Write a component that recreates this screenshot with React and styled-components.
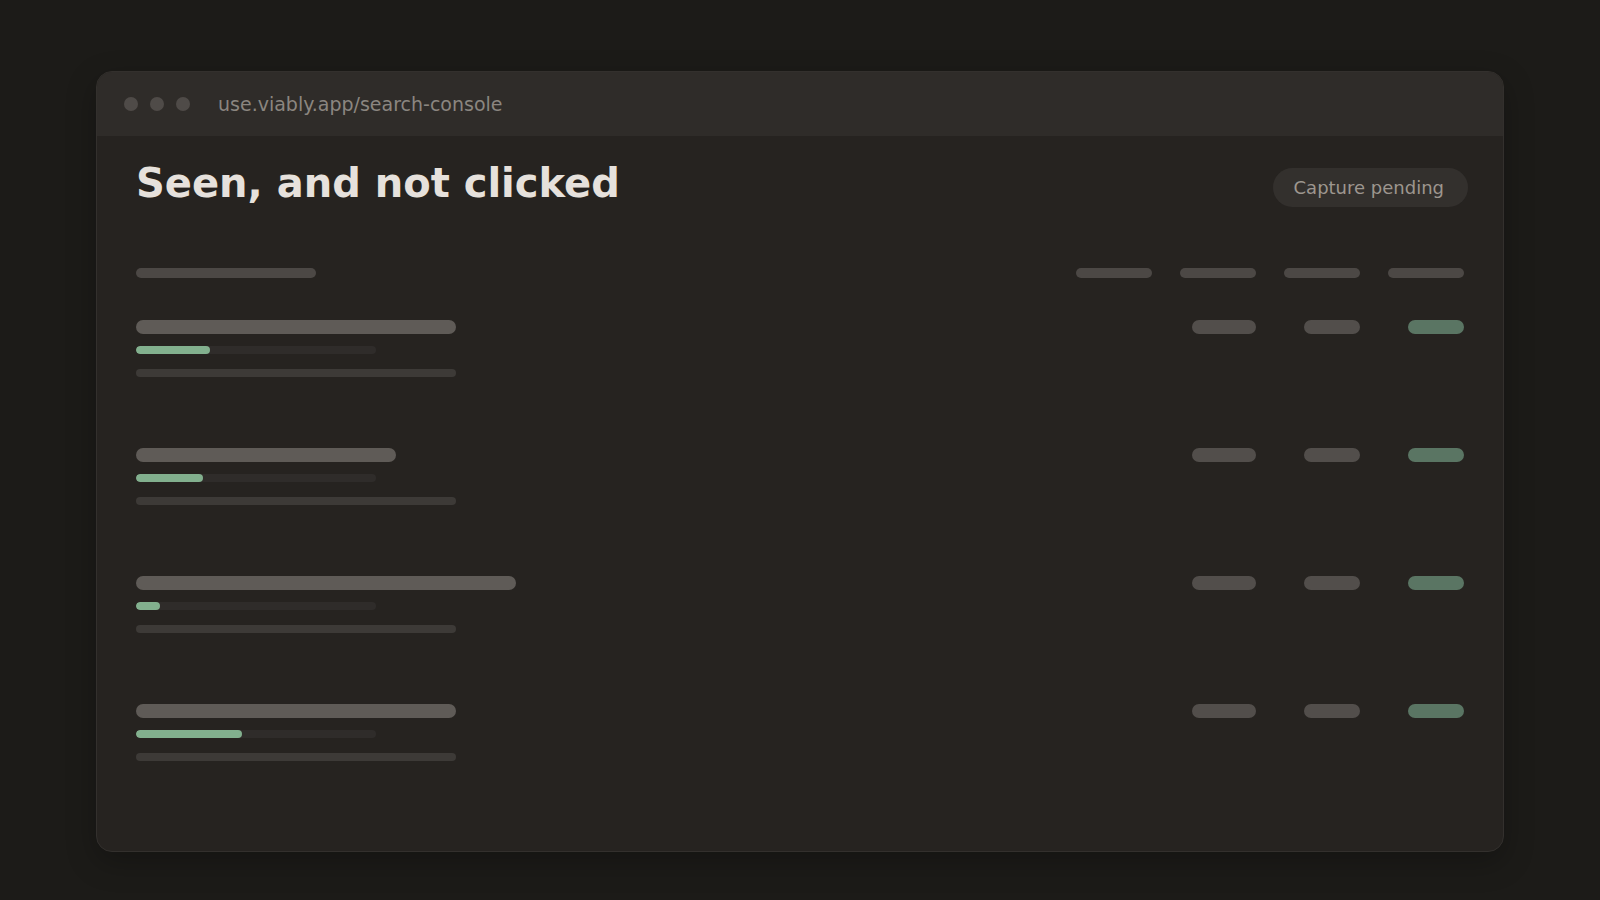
import React from 'react';
import styled, { createGlobalStyle } from 'styled-components';

const Global = createGlobalStyle`
  html, body {
    margin: 0;
    padding: 0;
    background: #1c1b18;
    font-family: "DejaVu Sans", "Liberation Sans", sans-serif;
  }
`;

const Page = styled.div`
  width: 1600px;
  height: 900px;
  box-sizing: border-box;
  padding: 71px 96px 0;
`;

const Window = styled.div`
  height: 781px;
  box-sizing: border-box;
  background: #262320;
  border: 1px solid #33302d;
  border-radius: 16px;
  overflow: hidden;
  box-shadow: 0 10px 30px rgba(0, 0, 0, 0.25);
`;

const TitleBar = styled.div`
  height: 64px;
  display: flex;
  align-items: center;
  padding-left: 27px;
  background: #2f2c29;
`;

const Dots = styled.div`
  display: flex;
  gap: 12px;
  margin-right: 28px;
`;

const Dot = styled.span`
  width: 14px;
  height: 14px;
  border-radius: 50%;
  background: #4f4b48;
`;

const Url = styled.span`
  font-size: 19px;
  color: #8b8680;
`;

const Content = styled.div`
  padding: 24px 39px 0 39px;
`;

const Header = styled.div`
  display: flex;
  justify-content: space-between;
  align-items: flex-start;
`;

const Title = styled.h1`
  margin: 0;
  font-size: 40px;
  line-height: 46px;
  font-weight: bold;
  color: #e6e1dc;
`;

const Badge = styled.div`
  margin-top: 8px;
  margin-right: -4px;
  height: 39px;
  padding: 0 24px 0 21px;
  display: flex;
  align-items: center;
  border-radius: 20px;
  background: #33302d;
  color: #9d968f;
  font-size: 18px;
`;

const Table = styled.div`
  margin-top: 61px;
  display: flex;
  flex-direction: column;
`;

const Row = styled.div`
  display: grid;
  grid-template-columns: 1fr repeat(4, 76px);
  column-gap: 28px;
  align-items: start;
  margin-bottom: ${p => p.$gap}px;
`;

const Bar = styled.div`
  width: ${p => p.$w}px;
  height: ${p => p.$h}px;
  border-radius: ${p => p.$h / 2}px;
  background: ${p => p.$c};
  justify-self: end;
`;

const Lines = styled.div`
  display: flex;
  flex-direction: column;
`;

const RowTitle = styled.div`
  width: ${p => p.$w}px;
  height: 14px;
  border-radius: 7px;
  background: #5f5b57;
`;

const Track = styled.div`
  width: 240px;
  height: 8px;
  margin-top: 12px;
  border-radius: 4px;
  background: #2f2c2a;
  overflow: hidden;
`;

const Fill = styled.div`
  width: ${p => p.$pct}%;
  height: 100%;
  border-radius: 4px;
  background: #82b08e;
`;

const SubLine = styled.div`
  width: 320px;
  height: 8px;
  margin-top: 15px;
  border-radius: 4px;
  background: #3d3a37;
`;

const HeadLabel = styled.div`
  width: 180px;
  height: 10px;
  border-radius: 5px;
  background: #4c4845;
`;

const rows = [
  { title: 320, pct: 31 },
  { title: 260, pct: 28 },
  { title: 380, pct: 10 },
  { title: 320, pct: 44 },
];

export default function App() {
  return (
    <>
      <Global />
      <Page>
        <Window>
          <TitleBar>
            <Dots>
              <Dot />
              <Dot />
              <Dot />
            </Dots>
            <Url>use.viably.app/search-console</Url>
          </TitleBar>
          <Content>
            <Header>
              <Title>Seen, and not clicked</Title>
              <Badge>Capture pending</Badge>
            </Header>
            <Table>
              <Row $gap={42}>
                <HeadLabel />
                <Bar $w={76} $h={10} $c="#4c4845" />
                <Bar $w={76} $h={10} $c="#4c4845" />
                <Bar $w={76} $h={10} $c="#4c4845" />
                <Bar $w={76} $h={10} $c="#4c4845" />
              </Row>
              {rows.map((r, i) => (
                <Row key={i} $gap={71}>
                  <Lines>
                    <RowTitle $w={r.title} />
                    <Track>
                      <Fill $pct={r.pct} />
                    </Track>
                    <SubLine />
                  </Lines>
                  <span />
                  <Bar $w={64} $h={14} $c="#524e4b" />
                  <Bar $w={56} $h={14} $c="#524e4b" />
                  <Bar $w={56} $h={14} $c="#5a7563" />
                </Row>
              ))}
            </Table>
          </Content>
        </Window>
      </Page>
    </>
  );
}
